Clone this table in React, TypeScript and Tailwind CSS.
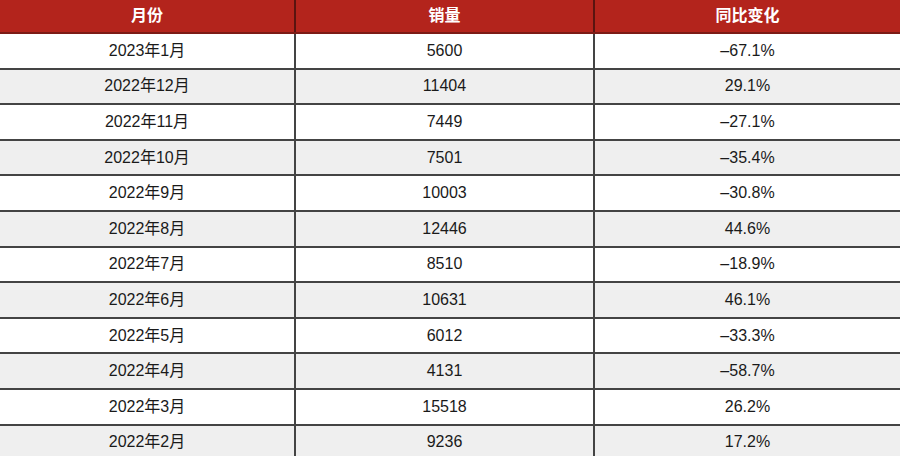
import React from "react";

const rows: [string, string, string][] = [
  ["2023年1月", "5600", "–67.1%"],
  ["2022年12月", "11404", "29.1%"],
  ["2022年11月", "7449", "–27.1%"],
  ["2022年10月", "7501", "–35.4%"],
  ["2022年9月", "10003", "–30.8%"],
  ["2022年8月", "12446", "44.6%"],
  ["2022年7月", "8510", "–18.9%"],
  ["2022年6月", "10631", "46.1%"],
  ["2022年5月", "6012", "–33.3%"],
  ["2022年4月", "4131", "–58.7%"],
  ["2022年3月", "15518", "26.2%"],
  ["2022年2月", "9236", "17.2%"],
];

const font = { fontFamily: '"Liberation Sans", "Noto Sans CJK SC", sans-serif' };

export default function App() {
  return (
    <div className="w-[900px] h-[456px] overflow-hidden bg-white" style={font}>
      <div className="grid grid-cols-[296px_299px_305px] h-[34px] bg-[#b3241c] border-b-2 border-[#7c1c16] text-white text-[16px] font-bold">
        <div className="flex items-center justify-center border-r-2 border-[#5a1410]">月份</div>
        <div className="flex items-center justify-center border-r-2 border-[#5a1410]">销量</div>
        <div className="flex items-center justify-center">同比变化</div>
      </div>
      {rows.map((r, i) => (
        <div
          key={i}
          className={
            "grid grid-cols-[296px_299px_305px] h-[35.6px] border-b-2 border-[#444444] text-[16px] text-[#1a1a1a] " +
            (i % 2 === 0 ? "bg-white" : "bg-[#efefef]")
          }
        >
          <div className="flex items-center justify-center border-r-2 border-[#444444]">{r[0]}</div>
          <div className="flex items-center justify-center border-r-2 border-[#444444]">{r[1]}</div>
          <div className="flex items-center justify-center">{r[2]}</div>
        </div>
      ))}
    </div>
  );
}
